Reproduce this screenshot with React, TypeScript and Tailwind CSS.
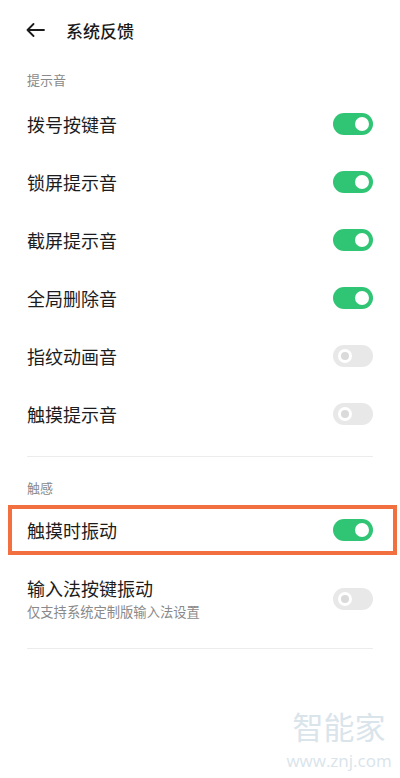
import React from "react";

const font = {
  fontFamily: '"Noto Sans CJK SC", "Noto Sans", sans-serif',
};

const soundRows = [
  { label: "拨号按键音", on: true },
  { label: "锁屏提示音", on: true },
  { label: "截屏提示音", on: true },
  { label: "全局删除音", on: true },
  { label: "指纹动画音", on: false },
  { label: "触摸提示音", on: false },
];

function Toggle({ on }: { on: boolean }) {
  if (on) {
    return (
      <div className="h-[22px] w-[40px] shrink-0 rounded-full bg-[#2fc574] flex items-center justify-end pr-[4px]">
        <div className="h-[14px] w-[14px] rounded-full bg-white" />
      </div>
    );
  }
  return (
    <div className="h-[22px] w-[40px] shrink-0 rounded-full bg-[#e8e8e8] flex items-center pl-[5px]">
      <div className="h-[14px] w-[14px] rounded-full border-[3px] border-white bg-[#dadada]" />
    </div>
  );
}

export default function App() {
  return (
    <div
      className="relative w-[400px] h-[778px] bg-white overflow-hidden"
      style={font}
    >
      {/* header */}
      <div className="h-[60px] flex items-center pl-[26px]">
        <svg width="19" height="14" viewBox="0 0 19 14" fill="none">
          <path
            d="M18 7H1.5M7.5 1L1.5 7L7.5 13"
            stroke="#1a1a1a"
            strokeWidth="1.8"
            strokeLinecap="round"
            strokeLinejoin="round"
          />
        </svg>
        <span className="ml-[21px] text-[17px] font-medium text-[#1a1a1a] leading-none">
          系统反馈
        </span>
      </div>

      {/* 提示音 */}
      <div className="pt-[10px] px-[27px] text-[13px] leading-[20px] text-[#8a8a8a]">
        提示音
      </div>
      <div className="mt-[5px]">
        {soundRows.map((r) => (
          <div
            key={r.label}
            className="h-[58px] px-[27px] flex items-center justify-between"
          >
            <span className="text-[18px] text-[#1c1c1c]">{r.label}</span>
            <Toggle on={r.on} />
          </div>
        ))}
      </div>
      <div className="mt-[13px] mx-[27px] h-px bg-[#ececec]" />

      {/* 触感 */}
      <div className="mt-[21px] px-[27px] text-[13px] leading-[20px] text-[#8a8a8a]">
        触感
      </div>
      <div className="mt-[7px] ml-[8px] w-[389px] h-[50px] border-[4px] border-[#f2703f] flex items-center justify-between pl-[15px] pr-[20px]">
        <span className="text-[18px] text-[#1c1c1c]">触摸时振动</span>
        <Toggle on />
      </div>
      <div className="pt-[20px] px-[27px] flex items-center justify-between">
        <div className="flex flex-col">
          <span className="text-[18px] leading-[26px] text-[#1c1c1c]">
            输入法按键振动
          </span>
          <span className="mt-[1px] text-[13.3px] leading-[20px] text-[#8a8a8a]">
            仅支持系统定制版输入法设置
          </span>
        </div>
        <Toggle on={false} />
      </div>
      <div className="mt-[26px] mx-[27px] h-px bg-[#ececec]" />

      {/* watermark */}
      <div className="absolute left-[288px] top-[708px] w-[102px] flex flex-col items-center text-[#d9e4eb]">
        <span className="text-[31px] leading-[36px]">智能家</span>
        <span
          className="text-[17px] leading-[17px] mt-[8px]"
          style={{ fontFamily: '"Open Sans", sans-serif' }}
        >
          www.znj.com
        </span>
      </div>
    </div>
  );
}
